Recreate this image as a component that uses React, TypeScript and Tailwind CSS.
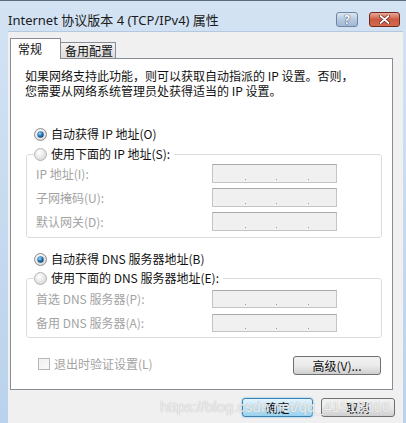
import React from "react";

const UI = { fontFamily: '"Noto Sans CJK SC", "Noto Sans", sans-serif' };
const TITLE = { fontFamily: '"Noto Sans", "Noto Sans CJK SC", sans-serif' };

function Radio({ checked, disabled }: { checked?: boolean; disabled?: boolean }) {
  return (
    <svg width="13" height="13" viewBox="0 0 13 13" className="shrink-0">
      <defs>
        <radialGradient id="rg-in" cx="0.4" cy="0.35" r="0.7">
          <stop offset="0" stopColor="#ffffff" />
          <stop offset="1" stopColor="#d6d6d6" />
        </radialGradient>
        <radialGradient id="rg-dot" cx="0.4" cy="0.35" r="0.7">
          <stop offset="0" stopColor="#a8d8f6" />
          <stop offset="0.5" stopColor="#2a7fbf" />
          <stop offset="1" stopColor="#0d3b66" />
        </radialGradient>
      </defs>
      <circle cx="6.5" cy="6.5" r="6" fill="url(#rg-in)" stroke={disabled ? "#b4b4b4" : "#8e8f8f"} />
      {checked && <circle cx="6.5" cy="6.5" r="3.2" fill="url(#rg-dot)" />}
    </svg>
  );
}

function IpBox({ h = 19 }: { h?: number }) {
  return (
    <div
      className="w-[125px] bg-[#f0f0f0] border border-[#c4c4c4] border-t-[#a8a8a8] relative"
      style={{ height: h }}
    >
      <span className="absolute left-[32px] bottom-[2px] w-[1px] h-[1px] bg-[#9a9a9a]" />
      <span className="absolute left-[63px] bottom-[2px] w-[1px] h-[1px] bg-[#9a9a9a]" />
      <span className="absolute left-[95px] bottom-[2px] w-[1px] h-[1px] bg-[#9a9a9a]" />
    </div>
  );
}

function Row({ label, h, mt }: { label: string; h?: number; mt: string }) {
  return (
    <div className={`flex items-center ${mt}`}>
      <span className="w-[176px] text-[12px] leading-[14px] text-[#a3a3a3]">{label}</span>
      <IpBox h={h} />
    </div>
  );
}

function Group({
  legend,
  children,
  mt,
}: {
  legend: string;
  children: React.ReactNode;
  mt: string;
}) {
  return (
    <fieldset className={`ml-[15px] w-[356px] border border-[#d9dde2] rounded-[3px] pl-[9px] ${mt}`}>
      <legend className="-ml-[2px] pr-[4px] pl-[0px] flex items-center gap-[4px] h-[16px] text-[12px] leading-[14px] text-[#111]">
        <Radio disabled />
        <span>{legend}</span>
      </legend>
      {children}
    </fieldset>
  );
}

function Btn({ children, w, primary }: { children: React.ReactNode; w: string; primary?: boolean }) {
  return (
    <div
      className={`${w} h-[19px] rounded-[3px] border flex items-center justify-center text-[12px] leading-[14px] text-[#111] ${
        primary
          ? "border-[#3c7fb1] bg-gradient-to-b from-[#e5f4fc] via-[#c4e5f6] to-[#98d1ef] shadow-[0_0_2px_#5eb4e8]"
          : "border-[#707070] bg-gradient-to-b from-[#f2f2f2] via-[#ebebeb] to-[#cfcfcf]"
      }`}
    >
      {children}
    </div>
  );
}

export default function App() {
  return (
    <div
      className="w-[406px] h-[423px] overflow-hidden relative bg-gradient-to-b from-[#d3e3f4] to-[#bad2ec] border-t border-[#5c6b7a] flex flex-col"
      style={UI}
    >
      {/* title bar */}
      <div className="h-[30px] flex items-start shrink-0">
        <span className="ml-[8px] mt-[11px] text-[13px] leading-[16px] text-[#1b1b1b]" style={TITLE}>
          Internet 协议版本 4 (TCP/IPv4) 属性
        </span>
        <div className="ml-auto mr-[6px] mt-[11px] flex gap-[11px]">
          <div className="w-[22px] h-[15px] rounded-[3px] border border-[#6f84a0] bg-gradient-to-b from-[#dde8f4] via-[#b6c9e0] to-[#9fb7d5] flex items-center justify-center">
            <span className="text-[12px] leading-[12px] font-bold text-white [text-shadow:0_0_1px_#2d3f57,0_0_1px_#2d3f57]" style={TITLE}>
              ?
            </span>
          </div>
          <div className="w-[31px] h-[15px] rounded-[3px] border border-[#6d2a1f] bg-gradient-to-b from-[#eaa898] via-[#cc5a43] to-[#d6684d] flex items-center justify-center">
            <svg width="11" height="9" viewBox="0 0 11 9">
              <path d="M1.5 1 L9.5 8 M9.5 1 L1.5 8" stroke="#5a1e15" strokeWidth="3.2" strokeLinecap="round" />
              <path d="M1.5 1 L9.5 8 M9.5 1 L1.5 8" stroke="#ffffff" strokeWidth="1.8" strokeLinecap="round" />
            </svg>
          </div>
        </div>
      </div>

      {/* client area */}
      <div className="ml-[8px] mr-[3px] flex-1 bg-[#f0f0f0] flex flex-col border-t border-[#b4c8de]">
        {/* tabs */}
        <div className="flex items-end h-[26px] ml-[2px] mt-[0px]">
          <div className="w-[51px] h-[21px] bg-white border border-b-0 border-[#898c95] text-[12px] leading-[14px] text-[#111] pl-[7px] pt-[3px] relative top-[1px] z-10">
            常规
          </div>
          <div className="w-[55px] h-[16px] border border-l-0 border-b-0 border-[#898c95] bg-gradient-to-b from-[#f3f3f3] to-[#dcdcdc] text-[12px] leading-[14px] text-[#111] pl-[4px] pt-[1px]">
            备用配置
          </div>
        </div>

        {/* tab panel */}
        <div className="ml-[2px] w-[383px] h-[332px] bg-white border border-[#898c95] flex flex-col">
          <p className="mt-[9px] ml-[14px] text-[12px] leading-[15px] text-[#111]">
            如果网络支持此功能，则可以获取自动指派的 IP 设置。否则，
            <br />
            您需要从网络系统管理员处获得适当的 IP 设置。
          </p>

          <div className="mt-[28px] ml-[23px] flex items-center gap-[4px] h-[16px] text-[12px] leading-[14px] text-[#111]">
            <Radio checked />
            <span>自动获得 IP 地址(O)</span>
          </div>

          <Group legend="使用下面的 IP 地址(S):" mt="mt-[4px]">
            <div className="pb-[6px]">
              <Row label="IP 地址(I):" mt="mt-[2px]" />
              <Row label="子网掩码(U):" mt="mt-[5px]" />
              <Row label="默认网关(D):" mt="mt-[5px]" />
            </div>
          </Group>

          <div className="mt-[13px] ml-[23px] flex items-center gap-[4px] h-[16px] text-[12px] leading-[14px] text-[#111]">
            <Radio checked />
            <span>自动获得 DNS 服务器地址(B)</span>
          </div>

          <Group legend="使用下面的 DNS 服务器地址(E):" mt="mt-[3px]">
            <div className="pb-[5px]">
              <Row label="首选 DNS 服务器(P):" h={18} mt="mt-[4px]" />
              <Row label="备用 DNS 服务器(A):" h={18} mt="mt-[6px]" />
            </div>
          </Group>

          <div className="mt-[18px] ml-[27px] mr-[11px] flex items-start justify-between">
            <div className="flex items-center gap-[4px] h-[14px] mt-[1px]">
              <div className="w-[12px] h-[12px] border border-[#b8b8b8] bg-gradient-to-br from-[#f0f0f0] to-[#fafafa]" />
              <span className="text-[12px] leading-[14px] text-[#a3a3a3]">退出时验证设置(L)</span>
            </div>
            <Btn w="w-[88px]">高级(V)...</Btn>
          </div>
        </div>

        {/* dialog buttons */}
        <div className="mt-[8px] mr-[8px] flex justify-end gap-[8px]">
          <Btn w="w-[71px]" primary>
            确定
          </Btn>
          <Btn w="w-[74px]">取消</Btn>
        </div>
      </div>

      {/* watermark */}
      <span
        className="absolute left-[160px] top-[397px] text-[15px] leading-[18px] text-white/80 [text-shadow:0_0_1px_#9a9a9a] pointer-events-none"
        style={{ fontFamily: '"Liberation Sans", Arial, sans-serif' }}
      >
        https://blog.csdn.net/qq_41518666
      </span>
    </div>
  );
}
